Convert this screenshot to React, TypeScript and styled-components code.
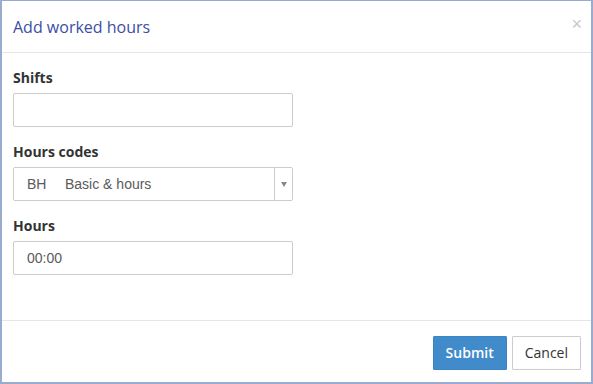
import React from "react";
import styled, { createGlobalStyle } from "styled-components";

const Global = createGlobalStyle`
  html, body { margin: 0; padding: 0; background: #ffffff; }
  body { font-family: "Open Sans", "Liberation Sans", sans-serif; }
  * { box-sizing: border-box; }
`;

const Dialog = styled.div`
  width: 593px;
  height: 384px;
  background: #ffffff;
  border-style: solid;
  border-color: #9aabd0;
  border-width: 1px 2px 2px 2px;
  display: flex;
  flex-direction: column;
`;

const Header = styled.div`
  display: flex;
  align-items: center;
  justify-content: space-between;
  height: 52px;
  padding: 0 11px;
  border-bottom: 1px solid #e5e5e5;
`;

const Title = styled.h4`
  margin: 0;
  font-size: 16px;
  font-weight: 400;
  color: #3b4ea3;
  line-height: 22px;
`;

const Close = styled.span`
  font-family: "Liberation Sans", Arial, sans-serif;
  font-size: 18px;
  line-height: 1;
  color: #c8c8c8;
  margin-right: -2px;
  margin-top: -6px;
`;

const Body = styled.div`
  flex: 1;
  padding: 15px 11px 0;
`;

const Group = styled.div`
  margin-bottom: 15px;
`;

const Label = styled.label`
  display: block;
  font-size: 14px;
  font-weight: 700;
  line-height: 20px;
  color: #333333;
  margin-bottom: 5px;
`;

const Input = styled.div`
  width: 280px;
  height: 34px;
  border: 1px solid #cccccc;
  border-radius: 2px;
  padding: 0 13px;
  display: flex;
  align-items: center;
  font-family: "Liberation Sans", Arial, sans-serif;
  font-size: 14px;
  color: #5a5a5a;
`;

const Select = styled(Input)`
  padding: 0 0 0 13px;
`;

const Code = styled.span`
  width: 38px;
`;

const SelectText = styled.span`
  flex: 1;
`;

const Arrow = styled.span`
  width: 18px;
  height: 100%;
  border-left: 1px solid #cccccc;
  display: flex;
  align-items: center;
  justify-content: center;
  &::after {
    content: "";
    border-left: 3.5px solid transparent;
    border-right: 3.5px solid transparent;
    border-top: 5px solid #888888;
  }
`;

const Footer = styled.div`
  border-top: 1px solid #e5e5e5;
  padding: 15px 10px 12px;
  display: flex;
  justify-content: flex-end;
  gap: 5px;
`;

const Button = styled.button<{ $primary?: boolean }>`
  height: 34px;
  padding: 0 12px;
  font-family: "Open Sans", sans-serif;
  font-size: 14px;
  line-height: 20px;
  border-radius: 1px;
  border: 1px solid ${(p) => (p.$primary ? "#3a85c6" : "#cccccc")};
  background: ${(p) => (p.$primary ? "#428bca" : "#ffffff")};
  color: ${(p) => (p.$primary ? "#ffffff" : "#333333")};
  font-weight: ${(p) => (p.$primary ? 600 : 400)};
`;

export default function App() {
  return (
    <>
      <Global />
      <Dialog>
        <Header>
          <Title>Add worked hours</Title>
          <Close>×</Close>
        </Header>
        <Body>
          <Group>
            <Label>Shifts</Label>
            <Input />
          </Group>
          <Group>
            <Label>Hours codes</Label>
            <Select>
              <Code>BH</Code>
              <SelectText>Basic &amp; hours</SelectText>
              <Arrow />
            </Select>
          </Group>
          <Group>
            <Label>Hours</Label>
            <Input>00:00</Input>
          </Group>
        </Body>
        <Footer>
          <Button $primary>Submit</Button>
          <Button>Cancel</Button>
        </Footer>
      </Dialog>
    </>
  );
}
